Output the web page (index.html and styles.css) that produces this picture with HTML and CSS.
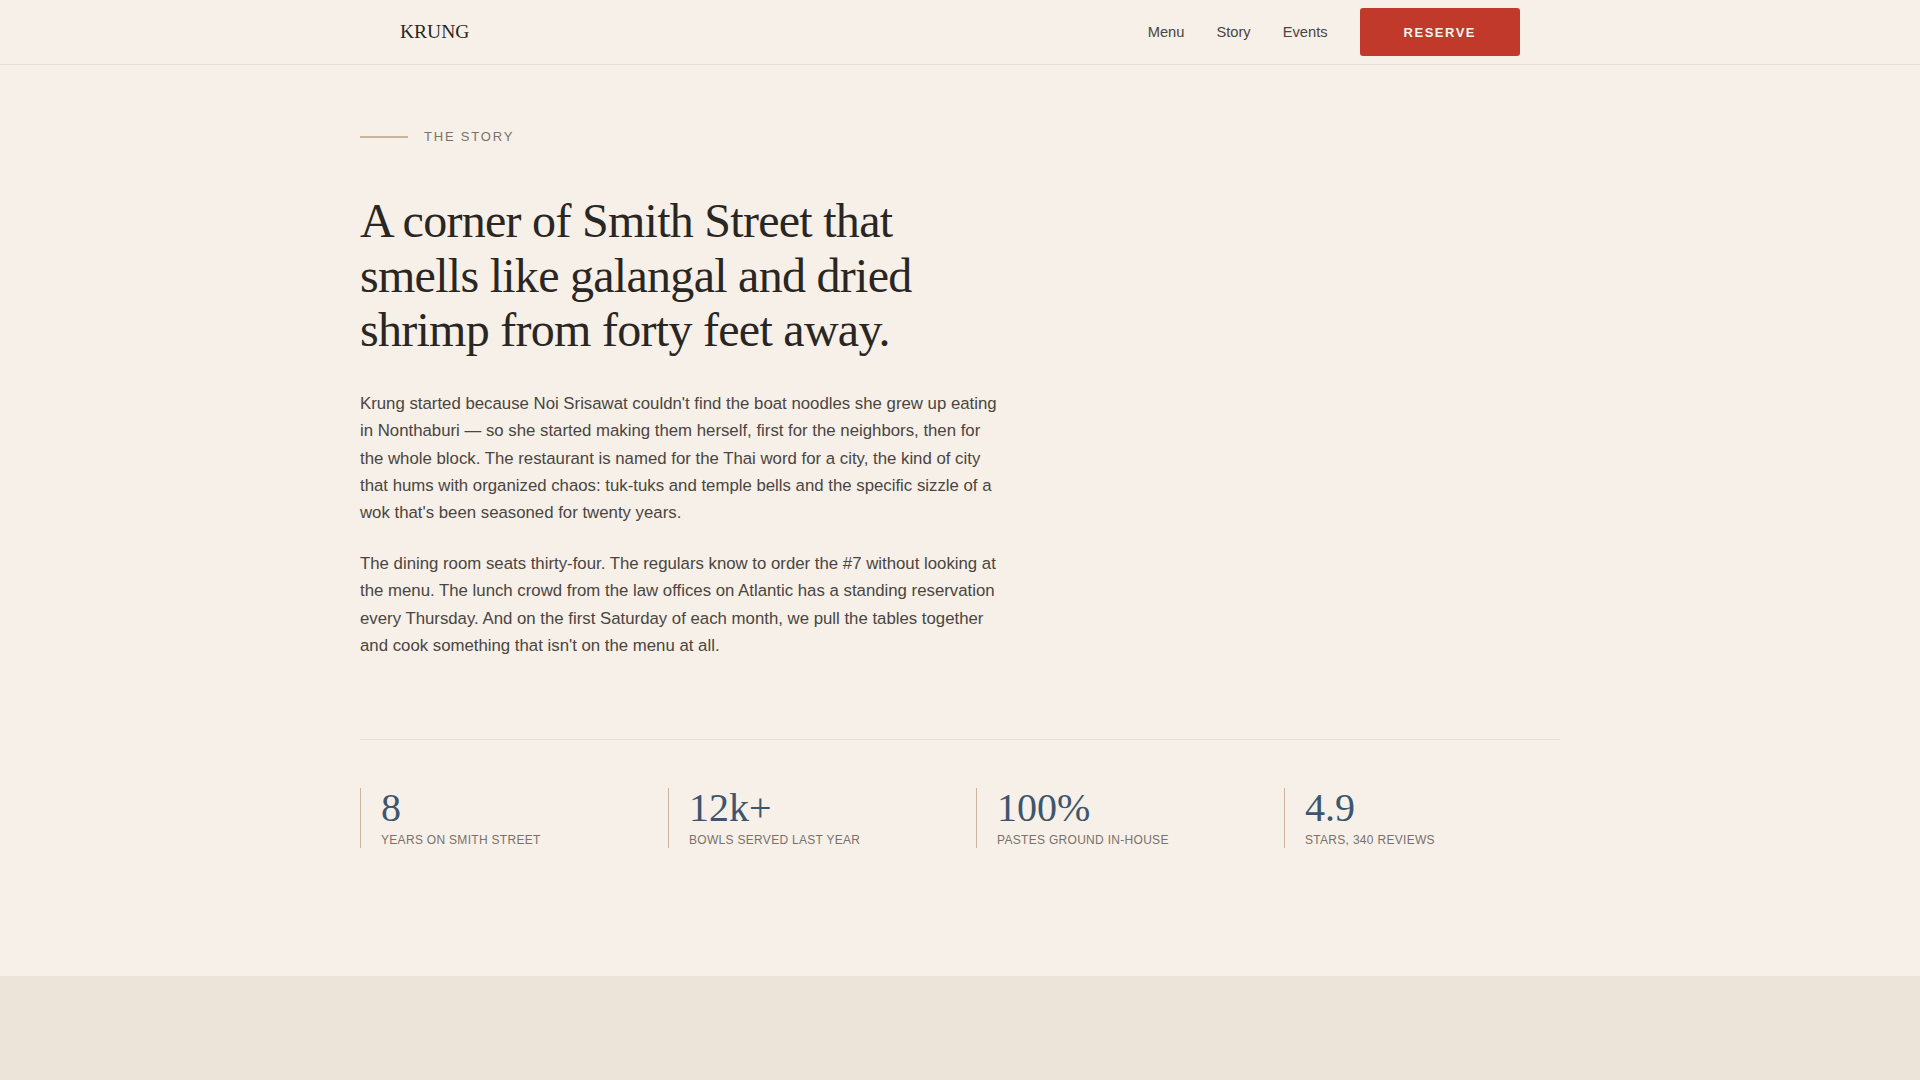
FILE: index.html
```html
<!DOCTYPE html>
<html lang="en">
<head>
    <meta charset="UTF-8">
    <meta name="viewport" content="width=device-width, initial-scale=1.0">
    <title>Krung — The Story</title>
    <link rel="stylesheet" href="styles.css">
</head>
<body>
    <header class="site-header">
        <div class="header-inner">
            <a class="logo" href="#">KRUNG</a>
            <nav class="main-nav">
                <a href="#menu">Menu</a>
                <a href="#story">Story</a>
                <a href="#events">Events</a>
                <a class="reserve-btn" href="#reserve">Reserve</a>
            </nav>
        </div>
    </header>

    <main class="story-section" id="story">
        <div class="container">
            <div class="eyebrow">
                <span class="eyebrow-line"></span>
                <span class="eyebrow-text">The Story</span>
            </div>

            <h1 class="story-title">A corner of Smith Street that smells like galangal and dried shrimp from forty feet away.</h1>

            <div class="story-body">
                <p>Krung started because Noi Srisawat couldn't find the boat noodles she grew up eating in Nonthaburi — so she started making them herself, first for the neighbors, then for the whole block. The restaurant is named for the Thai word for a city, the kind of city that hums with organized chaos: tuk-tuks and temple bells and the specific sizzle of a wok that's been seasoned for twenty years.</p>
                <p>The dining room seats thirty-four. The regulars know to order the #7 without looking at the menu. The lunch crowd from the law offices on Atlantic has a standing reservation every Thursday. And on the first Saturday of each month, we pull the tables together and cook something that isn't on the menu at all.</p>
            </div>

            <div class="stats">
                <div class="stat">
                    <span class="stat-number">8</span>
                    <span class="stat-label">Years on Smith Street</span>
                </div>
                <div class="stat">
                    <span class="stat-number">12k+</span>
                    <span class="stat-label">Bowls served last year</span>
                </div>
                <div class="stat">
                    <span class="stat-number">100%</span>
                    <span class="stat-label">Pastes ground in-house</span>
                </div>
                <div class="stat">
                    <span class="stat-number">4.9</span>
                    <span class="stat-label">Stars, 340 reviews</span>
                </div>
            </div>
        </div>
    </main>

    <section class="next-section" id="menu">
    </section>
</body>
</html>
```

FILE: styles.css
```css
body {
    margin: 0;
    background-color: #f6f0e9;
    font-family: "Liberation Sans", Arial, sans-serif;
    color: #2a2622;
}

a {
    text-decoration: none;
    color: inherit;
}

.container {
    max-width: 1200px;
    margin: 0 auto;
}

/* header */

.site-header {
    height: 64px;
    border-bottom: 1px solid #e8e0d6;
    background-color: #f6f0e9;
}

.header-inner {
    max-width: 1200px;
    height: 100%;
    margin: 0 auto;
    padding: 0 40px;
    box-sizing: border-box;
    display: flex;
    align-items: center;
    justify-content: space-between;
}

.logo {
    font-family: "Liberation Serif", "Times New Roman", serif;
    font-size: 19.5px;
    color: #2a2622;
}

.main-nav {
    display: flex;
    align-items: center;
    gap: 32px;
}

.main-nav a {
    font-size: 14.7px;
    color: #4a4540;
}

.main-nav .reserve-btn {
    display: flex;
    align-items: center;
    height: 48px;
    padding: 0 44px;
    box-sizing: border-box;
    background-color: #c0392b;
    border-radius: 3px;
    color: #fbf3ec;
    font-size: 13px;
    font-weight: bold;
    letter-spacing: 1.5px;
    text-transform: uppercase;
}

/* story */

.story-section {
    padding: 64px 0 128px;
}

.eyebrow {
    display: flex;
    align-items: center;
    gap: 16px;
    margin-bottom: 50px;
}

.eyebrow-line {
    width: 48px;
    height: 2px;
    background-color: #c9b59e;
}

.eyebrow-text {
    font-size: 13px;
    letter-spacing: 1.8px;
    text-transform: uppercase;
    color: #7a716a;
}

.story-title {
    max-width: 640px;
    margin: 0 0 32px;
    font-family: "Liberation Serif", "Times New Roman", serif;
    font-size: 48px;
    font-weight: normal;
    line-height: 1.14;
    letter-spacing: -0.015em;
    color: #2a2622;
}

.story-body {
    max-width: 640px;
}

.story-body p {
    margin: 0 0 24px;
    font-size: 16.8px;
    line-height: 27.2px;
    color: #4a4540;
}

.story-body p:last-child {
    margin-bottom: 0;
}

/* numbers */

.stats {
    margin-top: 80px;
    padding-top: 48px;
    border-top: 1px solid #e6ddd2;
    display: grid;
    grid-template-columns: repeat(4, 1fr);
    gap: 32px;
}

.stat {
    display: flex;
    flex-direction: column;
    gap: 4px;
    padding-left: 20px;
    border-left: 1px solid #c9b59e;
}

.stat-number {
    font-family: "Liberation Serif", "Times New Roman", serif;
    font-size: 40px;
    line-height: 1;
    color: #3d566d;
}

.stat-label {
    font-size: 12px;
    line-height: 16px;
    letter-spacing: 0.3px;
    text-transform: uppercase;
    color: #7a716a;
}

.next-section {
    min-height: 240px;
    background-color: #ece4d8;
}
```
